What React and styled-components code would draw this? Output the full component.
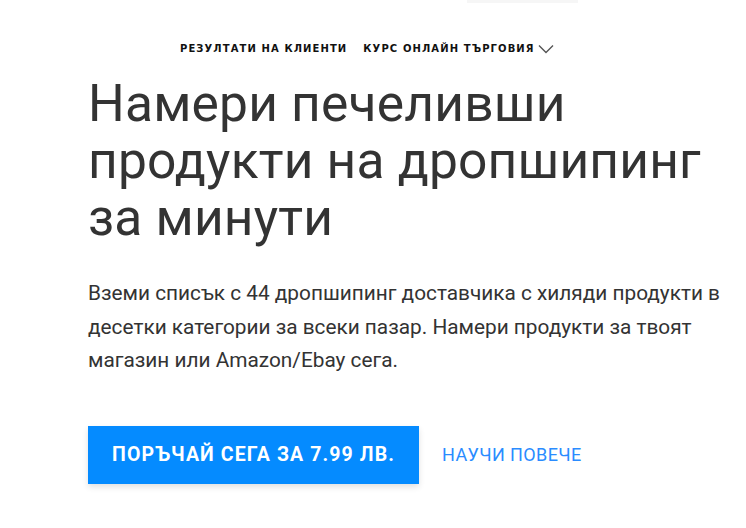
import React from "react";
import styled, { createGlobalStyle } from "styled-components";

const GlobalStyle = createGlobalStyle`
  html, body {
    margin: 0;
    padding: 0;
    background: #ffffff;
  }
  body {
    font-family: Roboto, "Noto Sans", sans-serif;
    color: #333333;
  }
`;

const Page = styled.div`
  width: 746px;
  height: 528px;
  overflow: hidden;
  display: flex;
  flex-direction: column;
`;

const TopStrip = styled.div`
  display: flex;
  padding-left: 467px;
`;

const SearchStub = styled.div`
  width: 111px;
  height: 3px;
  background: #f6f6f6;
`;

const Nav = styled.nav`
  display: flex;
  align-items: center;
  gap: 16px;
  margin-top: 40px;
  padding-left: 180px;
`;

const NavLink = styled.a`
  display: flex;
  align-items: center;
  gap: 3px;
  font-family: "DejaVu Sans", Verdana, sans-serif;
  font-weight: bold;
  font-size: 10px;
  letter-spacing: 1.1px;
  color: #111111;
  text-decoration: none;
  line-height: 12px;
`;

const Hero = styled.section`
  display: flex;
  flex-direction: column;
  padding-left: 88px;
  padding-right: 10px;
`;

const Title = styled.h1`
  margin: 20px 0 0 0;
  font-family: Roboto, sans-serif;
  font-weight: 400;
  font-size: 51.5px;
  line-height: 57px;
  color: #333333;
  letter-spacing: 0.2px;
`;

const Lead = styled.p`
  margin: 31px 0 0 0;
  font-family: Roboto, sans-serif;
  font-size: 20.8px;
  line-height: 33.5px;
  color: #333333;
  max-width: 645px;
`;

const Actions = styled.div`
  display: flex;
  align-items: center;
  gap: 23px;
  margin-top: 48px;
`;

const PrimaryButton = styled.a`
  display: flex;
  align-items: center;
  justify-content: center;
  width: 331px;
  height: 58px;
  background: #058bff;
  color: #ffffff;
  font-family: Roboto, sans-serif;
  font-weight: 700;
  font-size: 19.5px;
  letter-spacing: 1.1px;
  text-decoration: none;
  box-shadow: 0 3px 6px rgba(0, 0, 0, 0.12);
`;

const TextButton = styled.a`
  font-family: Roboto, sans-serif;
  font-size: 18px;
  letter-spacing: 0.4px;
  color: #2a8cff;
  text-decoration: none;
`;

const Chevron = () => (
  <svg width="16" height="10" viewBox="0 0 16 10">
    <path d="M1 1.5 L8 8.5 L15 1.5" fill="none" stroke="#555" strokeWidth="1.4" />
  </svg>
);

export default function App() {
  return (
    <Page>
      <GlobalStyle />
      <TopStrip>
        <SearchStub />
      </TopStrip>
      <Nav>
        <NavLink href="#">РЕЗУЛТАТИ НА КЛИЕНТИ</NavLink>
        <NavLink href="#">
          КУРС ОНЛАЙН ТЪРГОВИЯ <Chevron />
        </NavLink>
      </Nav>
      <Hero>
        <Title>
          Намери печеливши
          <br />
          продукти на дропшипинг
          <br />
          за минути
        </Title>
        <Lead>
          Вземи списък с 44 дропшипинг доставчика с хиляди продукти в десетки
          категории за всеки пазар. Намери продукти за твоят магазин или
          Amazon/Ebay сега.
        </Lead>
        <Actions>
          <PrimaryButton href="#">ПОРЪЧАЙ СЕГА ЗА 7.99 ЛВ.</PrimaryButton>
          <TextButton href="#">НАУЧИ ПОВЕЧЕ</TextButton>
        </Actions>
      </Hero>
    </Page>
  );
}
